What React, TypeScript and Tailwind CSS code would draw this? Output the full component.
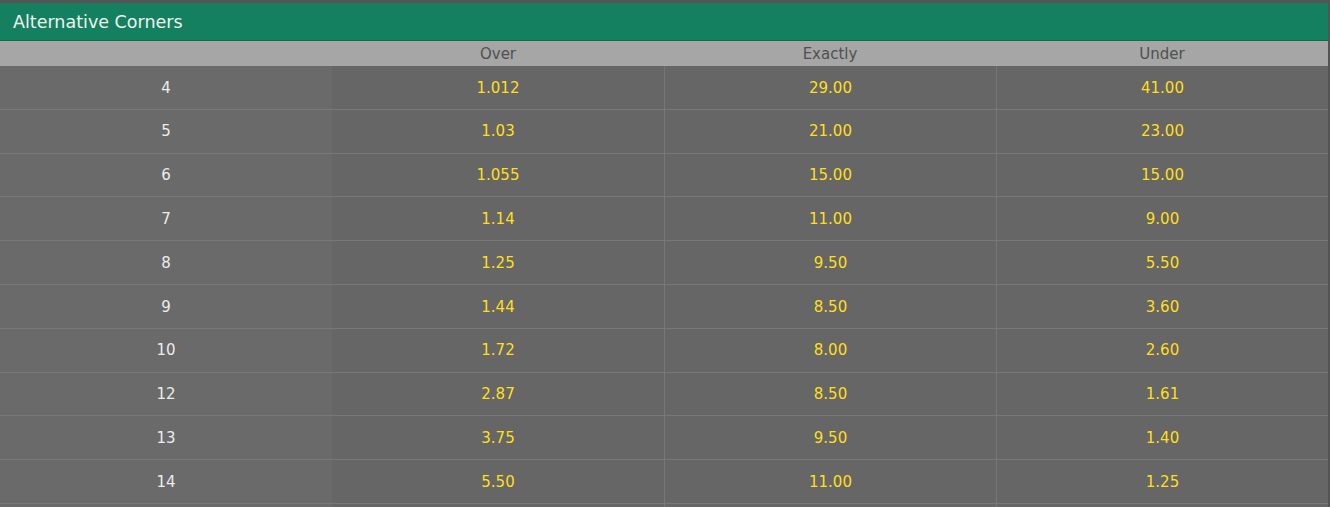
const rows: [string, string, string, string][] = [
  ["4", "1.012", "29.00", "41.00"],
  ["5", "1.03", "21.00", "23.00"],
  ["6", "1.055", "15.00", "15.00"],
  ["7", "1.14", "11.00", "9.00"],
  ["8", "1.25", "9.50", "5.50"],
  ["9", "1.44", "8.50", "3.60"],
  ["10", "1.72", "8.00", "2.60"],
  ["12", "2.87", "8.50", "1.61"],
  ["13", "3.75", "9.50", "1.40"],
  ["14", "5.50", "11.00", "1.25"],
];

export default function App() {
  return (
    <div className="w-[1330px] h-[507px] overflow-hidden bg-[#545454] pt-[3px] pr-[2px] font-['DejaVu_Sans',sans-serif]">
      {/* Titre du marché */}
      <div className="h-[38px] bg-[#158060] border-b border-[#0f6a4e] flex items-center pl-[13px] pt-[2px] text-[17.5px] text-[#eef3ee]">
        Alternative Corners
      </div>

      {/* En-tête des colonnes */}
      <div className="grid grid-cols-4 h-[25px] bg-[#a6a6a6] text-[15px] text-[#505050]">
        <div />
        <div className="flex items-center justify-center pt-[1px]">Over</div>
        <div className="flex items-center justify-center pt-[1px]">Exactly</div>
        <div className="flex items-center justify-center pt-[1px]">Under</div>
      </div>

      {/* Lignes */}
      {rows.map(([line, over, exactly, under]) => (
        <div key={line} className="grid grid-cols-4 h-[43.8px] border-b border-[#797979] text-[15px]">
          <div className="bg-[#6a6a6a] flex items-center justify-center pt-[1px] text-[#ececec]">{line}</div>
          <div className="bg-[#666666] flex items-center justify-center pt-[1px] text-[#ffdf1b]">{over}</div>
          <div className="bg-[#666666] border-l border-[#767676] flex items-center justify-center pt-[1px] text-[#ffdf1b]">{exactly}</div>
          <div className="bg-[#666666] border-l border-[#767676] flex items-center justify-center pt-[1px] text-[#ffdf1b]">{under}</div>
        </div>
      ))}

      {/* Ligne suivante, coupée */}
      <div className="grid grid-cols-4 h-[43.8px]">
        <div className="bg-[#6a6a6a]" />
        <div className="bg-[#666666]" />
        <div className="bg-[#666666] border-l border-[#767676]" />
        <div className="bg-[#666666] border-l border-[#767676]" />
      </div>
    </div>
  );
}
